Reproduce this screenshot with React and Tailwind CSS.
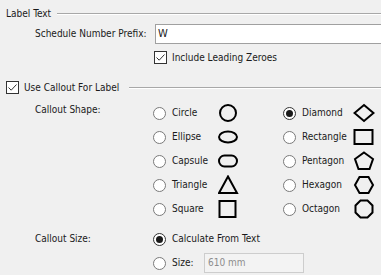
import React from 'react'

function Check(){
    return(
        <div className="w-[13px] h-[13px] border border-[#333] bg-white flex items-center justify-center shrink-0">
            <svg width="11" height="11" viewBox="0 0 11 11">
                <path d="M1.5 5.5 L4.2 8.2 L9.5 2.5" fill="none" stroke="#333" strokeWidth="1" />
            </svg>
        </div>
    )
}

function Radio({ on }){
    return(
        <div className={"w-[13px] h-[13px] rounded-full border bg-white flex items-center justify-center shrink-0 " + (on ? "border-[#333]" : "border-[#7a7a7a]")}>
            {on && <div className="w-[7px] h-[7px] rounded-full bg-[#1a1a1a]" />}
        </div>
    )
}

function Shape({ kind }){
    const s = { fill: 'none', stroke: '#000', strokeWidth: 2, strokeLinejoin: 'miter' }
    return(
        <svg width="22" height="20" viewBox="0 0 22 20" className="shrink-0">
            {kind === 'circle' && <circle cx="10" cy="10" r="8" {...s} />}
            {kind === 'ellipse' && <ellipse cx="10" cy="10" rx="9" ry="5.5" {...s} />}
            {kind === 'capsule' && <rect x="1" y="4.5" width="18" height="11" rx="5.5" {...s} />}
            {kind === 'triangle' && <path d="M10 1.5 L19 18 L1 18 Z" {...s} />}
            {kind === 'square' && <rect x="1.5" y="2" width="16" height="16" {...s} />}
            {kind === 'diamond' && <path d="M11 2 L20.5 10 L11 18 L1.5 10 Z" {...s} />}
            {kind === 'rectangle' && <rect x="1.5" y="3" width="18" height="14" {...s} />}
            {kind === 'pentagon' && <path d="M11 1.5 L20 8 L16.5 18 L5.5 18 L2 8 Z" {...s} />}
            {kind === 'hexagon' && <path d="M6.5 2 L15.5 2 L20 10 L15.5 18 L6.5 18 L2 10 Z" {...s} />}
            {kind === 'octagon' && <path d="M7.5 1.5 L14.5 1.5 L19.5 6.5 L19.5 13.5 L14.5 18.5 L7.5 18.5 L2.5 13.5 L2.5 6.5 Z" {...s} />}
        </svg>
    )
}

function Option({ label, shape, on, wide }){
    return(
        <div className="h-[24px] flex items-center">
            <Radio on={on} />
            <span className={"ml-[6px] " + (wide ? "w-[51px]" : "w-[46px]")}>{label}</span>
            <Shape kind={shape} />
        </div>
    )
}

function App(){
    return(
        <div className="w-[381px] h-[275px] overflow-hidden bg-[#f0f0f0] text-[#1a1a1a] text-[10px] leading-none font-['DejaVu_Sans_Condensed','Liberation_Sans',sans-serif] flex flex-col">
            {/* Label Text group */}
            <div className="h-[24px] pt-[4px] flex items-center pl-[6px]">
                <span>Label Text</span>
                <div className="flex-1 ml-[6px] border-t border-[#a8a8a8] border-b-white border-b h-0" />
            </div>

            <div className="h-[21px] flex items-center pl-[35px]">
                <span className="w-[120px]">Schedule Number Prefix:</span>
                <div className="flex-1 h-full bg-white border border-[#a0a0a0] border-r-0 flex items-center pl-[2px] text-[11px]">W</div>
            </div>

            <div className="mt-[7px] h-[13px] flex items-center pl-[154px]">
                <Check />
                <span className="ml-[5px]">Include Leading Zeroes</span>
            </div>

            {/* Callout group */}
            <div className="mt-[17px] h-[13px] flex items-center pl-[6px]">
                <Check />
                <span className="ml-[5px]">Use Callout For Label</span>
                <div className="flex-1 ml-[10px] border-t border-[#a8a8a8] border-b-white border-b h-0" />
            </div>

            <div className="mt-[7px] flex pl-[35px]">
                <span className="w-[118px] h-[18px] flex items-center">Callout Shape:</span>
                <div className="grid grid-cols-[130px_auto]">
                    <div className="flex flex-col">
                        <Option label="Circle" shape="circle" />
                        <Option label="Ellipse" shape="ellipse" />
                        <Option label="Capsule" shape="capsule" />
                        <Option label="Triangle" shape="triangle" />
                        <Option label="Square" shape="square" />
                    </div>
                    <div className="flex flex-col">
                        <Option label="Diamond" shape="diamond" on wide />
                        <Option label="Rectangle" shape="rectangle" wide />
                        <Option label="Pentagon" shape="pentagon" wide />
                        <Option label="Hexagon" shape="hexagon" wide />
                        <Option label="Octagon" shape="octagon" wide />
                    </div>
                </div>
            </div>

            <div className="mt-[6px] flex pl-[35px]">
                <span className="w-[118px] h-[24px] flex items-center">Callout Size:</span>
                <div className="flex flex-col">
                    <div className="h-[24px] flex items-center">
                        <Radio on />
                        <span className="ml-[6px]">Calculate From Text</span>
                    </div>
                    <div className="h-[24px] flex items-center">
                        <Radio />
                        <span className="ml-[6px] w-[32px]">Size:</span>
                        <div className="w-[100px] h-[20px] border border-[#cdcdcd] bg-[#f3f3f3] flex items-center pl-[3px] text-[#8d8d8d]">610 mm</div>
                    </div>
                </div>
            </div>
        </div>
    )
}

export default App
